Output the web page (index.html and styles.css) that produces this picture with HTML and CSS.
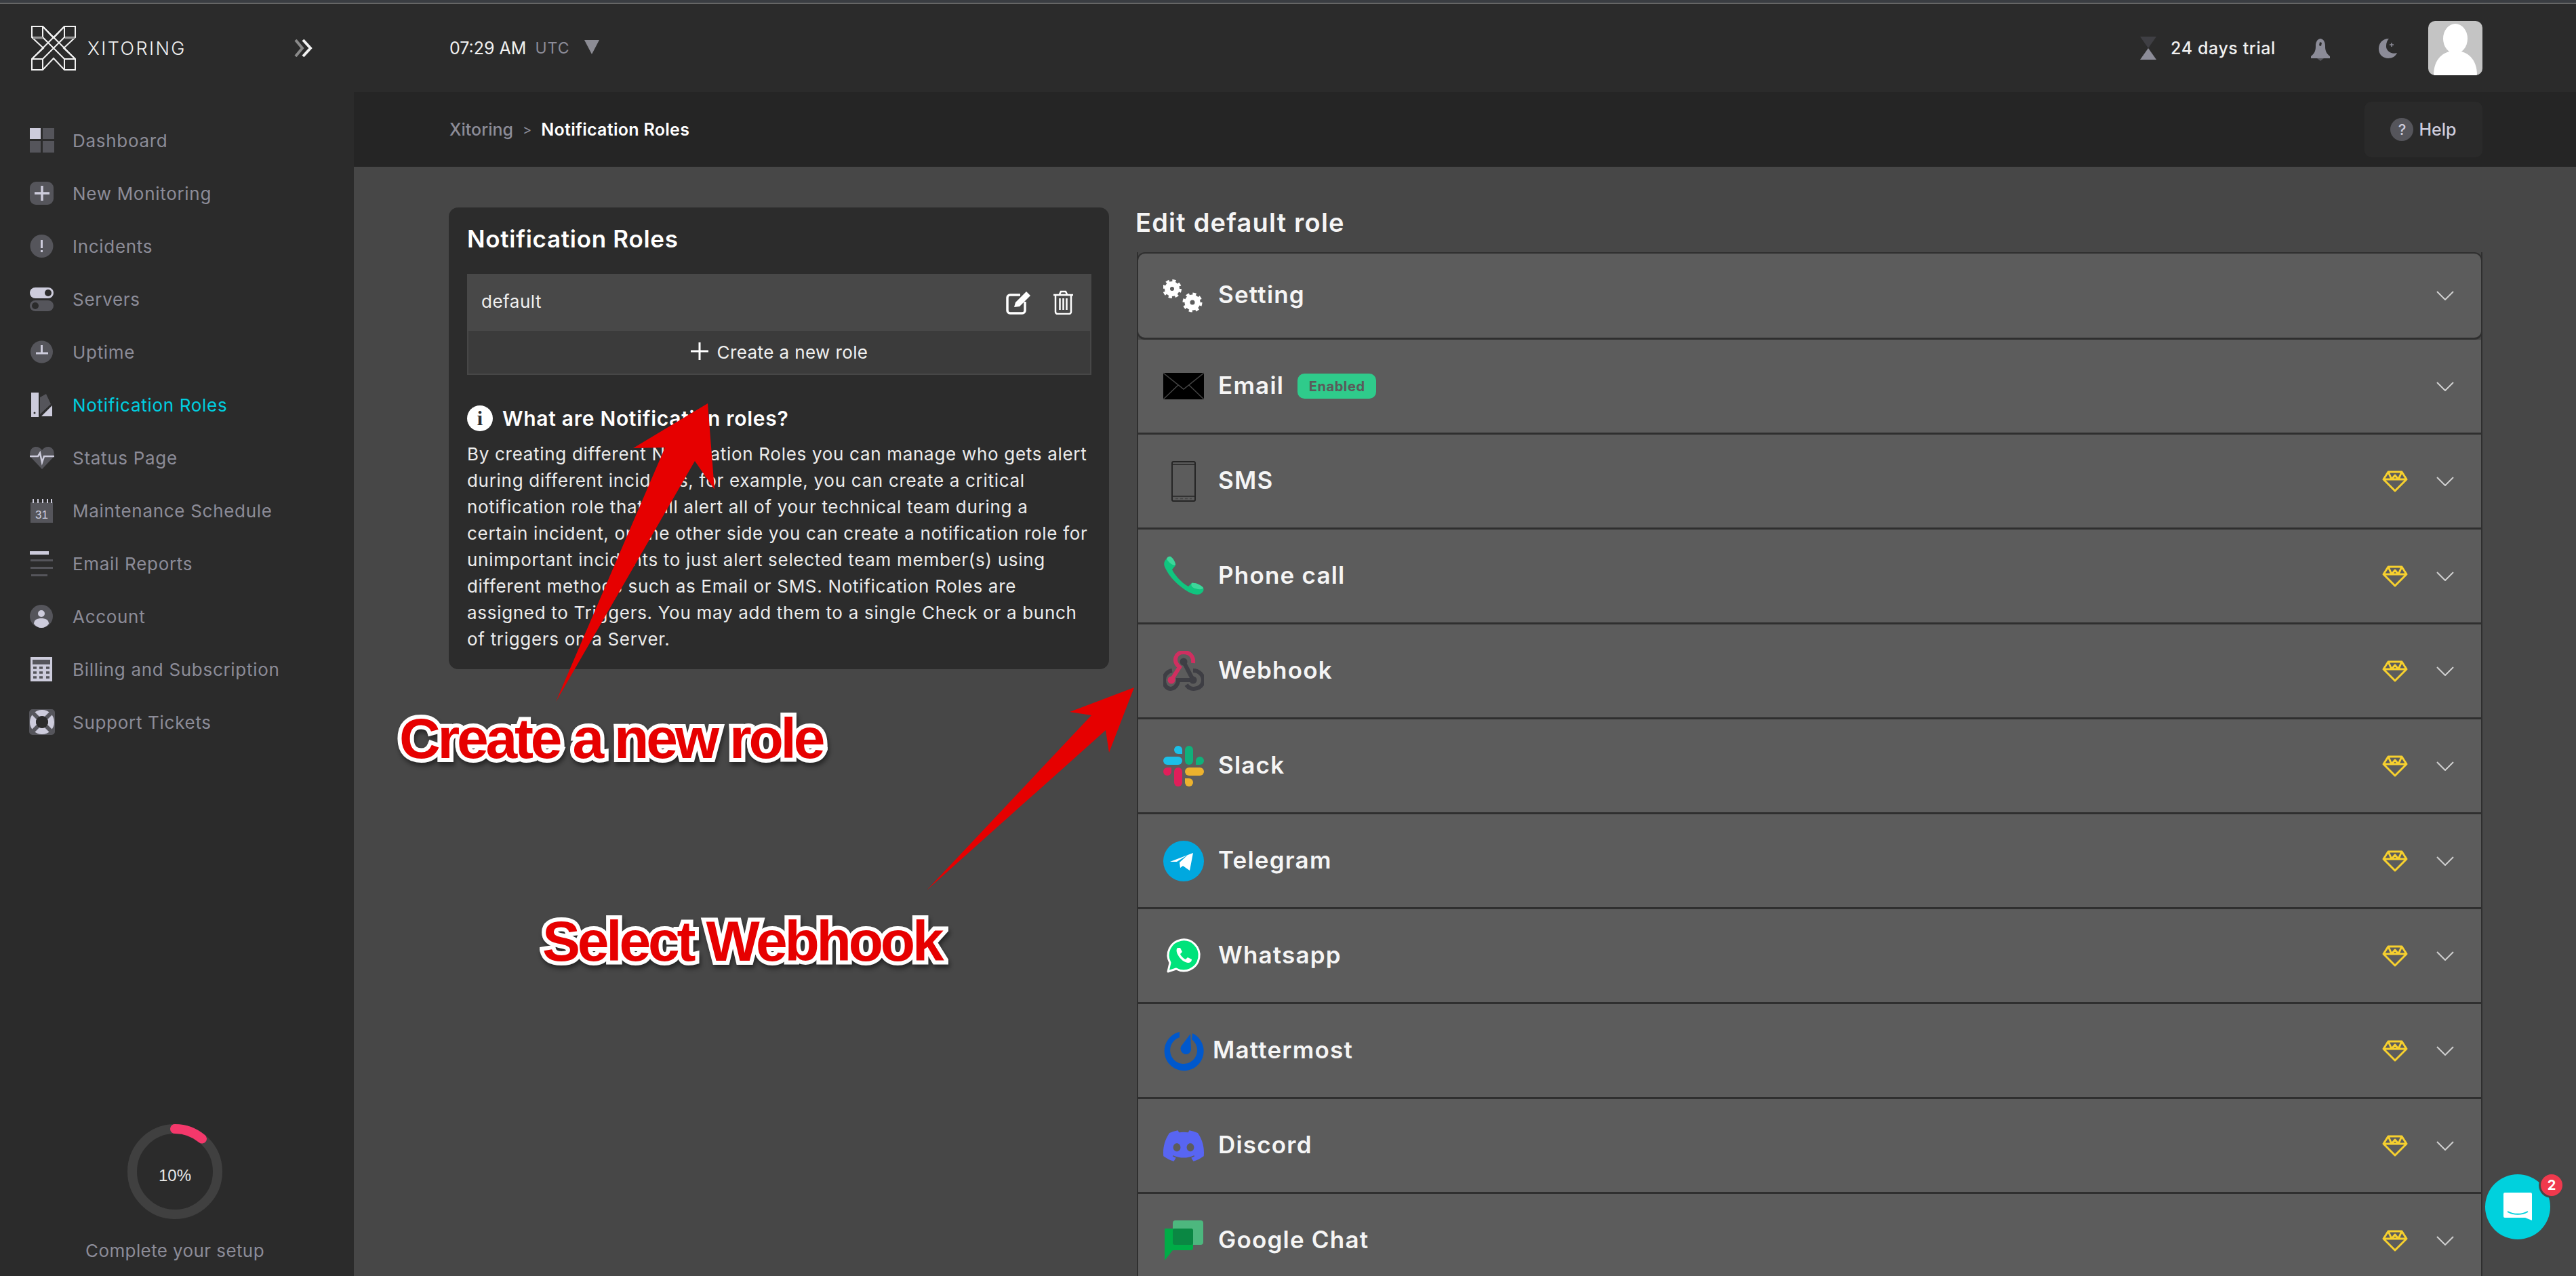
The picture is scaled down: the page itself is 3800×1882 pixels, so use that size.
FILE: index.html
```html
<!DOCTYPE html>
<html lang="en">
<head>
<meta charset="utf-8">
<title>Xitoring - Notification Roles</title>
<link rel="stylesheet" href="styles.css">
</head>
<body>
<div class="topline"></div>
<div class="shell">
  <aside class="sidebar">
    <div class="brand">
      <svg class="logo" viewBox="0 0 66 66" fill="none" stroke="#f2f2f2" stroke-width="2">
        <path d="M1 1h16l16 17L49 1h16v16L48 33l17 16v16H49L33 48 17 65H1V49l17-16L1 17z"/>
        <path d="M1 17h16V1M49 1v16h16M1 49h16v16M49 65V49h16"/>
        <path d="M17 1l32 32 16 16M17 17l32 32M49 1L17 33 1 49M49 17L17 49"/>
        <path d="M3 18h14M50 18h14" stroke="#8a8a8a" stroke-width="3"/>
      </svg>
      <span class="brand-name">XITORING</span>
      <svg class="collapse" viewBox="0 0 28 26" fill="none" stroke-width="4">
        <path d="M2 1l10 12L2 25" stroke="#8a8a8a"/>
        <path d="M13 1l11 12-11 12" stroke="#f2f2f2"/>
      </svg>
    </div>
    <nav class="nav">
      <a class="nav-item"><svg class="nav-icon" viewBox="0 0 36 36"><rect x="0" y="0" width="16" height="16" fill="#cdccdc"/><rect x="19" y="0" width="17" height="16" fill="#55555b"/><rect x="0" y="19" width="16" height="17" fill="#55555b"/><rect x="19" y="19" width="17" height="17" fill="#55555b"/></svg><span>Dashboard</span></a>
      <a class="nav-item"><svg class="nav-icon" viewBox="0 0 36 36"><rect width="35" height="34" x="0" y="1" rx="9" fill="#55555b"/><path d="M18 7v22M7 18h22" stroke="#cdccdc" stroke-width="3.5"/></svg><span>New Monitoring</span></a>
      <a class="nav-item"><svg class="nav-icon" viewBox="0 0 36 36"><circle cx="17.500" cy="18" r="17" fill="#55555b"/><path d="M17.500 9v12M17.500 24v3" stroke="#cdccdc" stroke-width="3"/></svg><span>Incidents</span></a>
      <a class="nav-item"><svg class="nav-icon" viewBox="0 0 36 36"><rect x="0" y="1" width="35" height="16" rx="8" fill="#cdccdc"/><circle cx="27" cy="9" r="5" fill="#2b2b2b"/><rect x="0" y="20" width="35" height="16" rx="8" fill="#55555b"/><circle cx="8" cy="28" r="5" fill="#2b2b2b"/></svg><span>Servers</span></a>
      <a class="nav-item"><svg class="nav-icon" viewBox="0 0 36 36"><circle cx="17.500" cy="18" r="16.500" fill="#55555b"/><path d="M17.500 8v12H27M17.500 20H9" stroke="#cdccdc" stroke-width="3" fill="none"/></svg><span>Uptime</span></a>
      <a class="nav-item nav-active"><svg class="nav-icon" viewBox="0 0 36 36"><rect x="2" y="0" width="11" height="36" fill="#cdccdc"/><circle cx="7" cy="30" r="1.500" fill="#2b2b2b"/><path d="M15 7l9-5 7 15-16 15z" fill="#55555b"/><path d="M17 35l16-16v16z" fill="#cdccdc"/></svg><span>Notification Roles</span></a>
      <a class="nav-item"><svg class="nav-icon" viewBox="0 0 36 36"><path d="M18 35L2 18C-2 12 1 2 9 2c4 0 7 2 9 5 2-3 5-5 9-5 8 0 11 10 7 16z" fill="#55555b"/><path d="M0 16h12l3-5 3 14 3-9h15" stroke="#cdccdc" stroke-width="2.500" fill="none"/></svg><span>Status Page</span></a>
      <a class="nav-item"><svg class="nav-icon" viewBox="0 0 36 36"><rect x="1" y="6" width="33" height="30" fill="#55555b"/><path d="M5 1v6M12 1v6M19 1v6M26 1v6M32 1v6" stroke="#cdccdc" stroke-width="2"/><text x="17.500" y="30" class="cal-num">31</text></svg><span>Maintenance Schedule</span></a>
      <a class="nav-item"><svg class="nav-icon" viewBox="0 0 36 36"><rect x="0" y="0" width="28" height="5" fill="#cdccdc"/><rect x="1" y="12" width="33" height="3" fill="#55555b"/><rect x="1" y="23" width="33" height="3" fill="#55555b"/><rect x="2" y="34" width="24" height="3" fill="#55555b"/></svg><span>Email Reports</span></a>
      <a class="nav-item"><svg class="nav-icon" viewBox="0 0 36 36"><circle cx="17" cy="18" r="17" fill="#55555b"/><circle cx="17" cy="14" r="5" fill="#cdccdc"/><path d="M6 29c0-6 5-8 11-8s11 2 11 8c-3 4-7 6-11 6s-8-2-11-6z" fill="#cdccdc"/></svg><span>Account</span></a>
      <a class="nav-item"><svg class="nav-icon" viewBox="0 0 36 36"><rect x="1" y="0" width="32" height="36" fill="#cdccdc"/><rect x="4" y="4" width="26" height="7" fill="#55555b"/><path d="M5 16h5M14 16h5M24 16h5M5 23h5M14 23h5M24 23h5M5 30h5M14 30h5M24 30h5" stroke="#55555b" stroke-width="3.500"/></svg><span>Billing and Subscription</span></a>
      <a class="nav-item"><svg class="nav-icon support" viewBox="0 0 38 38"><rect width="38" height="38" rx="5" fill="#55555b"/><circle cx="19" cy="19" r="13.500" fill="none" stroke="#cdccdc" stroke-width="9"/><path d="M6 6l26 26M32 6L6 32" stroke="#55555b" stroke-width="6"/><circle cx="19" cy="19" r="9" fill="#2b2b2b"/></svg><span>Support Tickets</span></a>
    </nav>
    <div class="setup">
      <div class="ring">
        <svg viewBox="0 0 140 140"><circle cx="70" cy="70" r="63" fill="none" stroke="#404040" stroke-width="14"/><path d="M70 7A63 63 0 0 1 110 21.600" fill="none" stroke="#f4386b" stroke-width="14" stroke-linecap="round"/></svg>
        <span class="ring-label">10%</span>
      </div>
      <div class="setup-text">Complete your setup</div>
    </div>
  </aside>
  <main class="main">
    <header class="topbar">
      <span class="clock">07:29 AM</span><span class="tz">UTC</span>
      <svg class="tz-caret" viewBox="0 0 22 21"><path d="M0 0h22L11 21z" fill="#8c8c94"/></svg>
      <div class="top-right">
        <svg class="hourglass" viewBox="0 0 24 34"><path d="M0 0h24L12 17z" fill="#3f3f44"/><path d="M12 17L24 34H0z" fill="#8c8c98"/></svg>
        <span class="trial">24 days trial</span>
        <svg class="bell" viewBox="0 0 28 38"><path d="M14 0v5c-5 1-7 5-7 11 0 6-1 10-7 15v3h28v-3c-6-5-7-9-7-15 0-6-2-10-7-11V0z" fill="#8c8c98"/><path d="M9 34h10l-5 4z" fill="#55555b"/><path d="M13 10l3 1-1 5-3-1z" fill="#2b2b2b"/></svg>
        <svg class="moon" viewBox="0 0 28 29"><path d="M15 0C5 0 0 7 0 15c0 9 7 14 14 14 6 0 11-3 13-8-8 3-17-3-16-11 0-4 2-8 4-10z" fill="#8c8c98"/><path d="M19 6v6M16 9h6" stroke="#8c8c98" stroke-width="1.500"/></svg>
        <svg class="avatar" viewBox="0 0 80 80"><rect width="80" height="80" fill="#c4c4c4"/><ellipse cx="40" cy="26" rx="18" ry="22" fill="#fff"/><path d="M8 80c0-24 14-36 32-36s32 12 32 36z" fill="#fff"/></svg>
      </div>
    </header>
    <div class="crumbs">
      <div class="crumb-path"><span class="crumb-root">Xitoring</span><span class="crumb-sep">&gt;</span><span class="crumb-now">Notification Roles</span></div>
      <a class="help"><span class="help-mark">?</span><span>Help</span></a>
    </div>
    <div class="content">
      <section class="card">
        <h2 class="card-title">Notification Roles</h2>
        <div class="role-list">
          <div class="role-row">
            <span class="role-name">default</span>
            <div class="role-actions">
              <svg class="act-edit" viewBox="0 0 36 36" fill="none" stroke="#fff" stroke-width="3.500"><path d="M21 7H6a4 4 0 0 0-4 4v19a4 4 0 0 0 4 4h18a4 4 0 0 0 4-4V17"/><path d="M12 25l2-7L30 2l6 6-16 16z" fill="#fff" stroke="none"/></svg>
              <svg class="act-trash" viewBox="0 0 31 36" fill="none" stroke="#fff" stroke-width="2.500"><path d="M1 7h29M10 6l2-4h7l2 4" /><path d="M4 7v25a3 3 0 0 0 3 3h17a3 3 0 0 0 3-3V7M10.500 12v17M15.500 12v17M20.500 12v17"/></svg>
            </div>
          </div>
          <div class="role-new"><svg class="plus" viewBox="0 0 26 26"><path d="M13 0v26M0 13h26" stroke="#fff" stroke-width="3"/></svg><span>Create a new role</span></div>
        </div>
        <div class="info-head">
          <span class="info-mark">i</span><h3>What are Notification roles?</h3>
        </div>
        <p class="info-text">By creating different Notification Roles you can manage who gets alert<br>during different incidents, for example, you can create a critical<br>notification role that will alert all of your technical team during a<br>certain incident, on the other side you can create a notification role for<br>unimportant incidents to just alert selected team member(s) using<br>different methods such as Email or SMS. Notification Roles are<br>assigned to Triggers. You may add them to a single Check or a bunch<br>of triggers on a Server.</p>
      </section>
      <section class="editor">
        <h2 class="editor-title">Edit default role</h2>
        <div class="accordion">
          <div class="acc-row acc-first">
            <svg class="acc-icon" viewBox="0 0 60 60"><g fill="none" stroke="#fff"><circle cx="13" cy="20" r="7" stroke-width="8"/><circle cx="13" cy="20" r="12" stroke-width="4" stroke-dasharray="5 4.420"/><circle cx="43" cy="40" r="7.500" stroke-width="8"/><circle cx="43" cy="40" r="12.500" stroke-width="4" stroke-dasharray="5 4.820"/></g></svg>
            <span class="acc-label">Setting</span>
            <svg class="chevron" viewBox="0 0 26 14"><path d="M1 1l12 12L25 1" fill="none" stroke="#d0d0d0" stroke-width="2"/></svg>
          </div>
          <div class="acc-row">
            <svg class="acc-icon" viewBox="0 0 60 60"><rect x="0" y="10" width="60" height="39" fill="#000"/><path d="M0 10l30 24 30-24M0 49l22-21M60 49L38 28" fill="none" stroke="#444" stroke-width="1.500"/></svg>
            <span class="acc-label">Email</span><span class="enabled">Enabled</span>
            <svg class="chevron" viewBox="0 0 26 14"><path d="M1 1l12 12L25 1" fill="none" stroke="#d0d0d0" stroke-width="2"/></svg>
          </div>
          <div class="acc-row">
            <svg class="acc-icon" viewBox="0 0 60 60"><rect x="13" y="1" width="34" height="58" rx="2" fill="none" stroke="#252525" stroke-width="2"/><path d="M14 5h32M14 52h32" stroke="#252525" stroke-width="1.500"/><path d="M18 55.500h24" stroke="#444" stroke-width="1.500" stroke-dasharray="4 3"/></svg>
            <span class="acc-label">SMS</span>
            <svg class="gem" viewBox="0 0 38 32"><path d="M9 2h20l7 11-17 17L2 13zM2 13h34M9 2l5 11 5-6 5 6 5-11" fill="none" stroke="#f6d02f" stroke-width="3" stroke-linejoin="round"/></svg>
            <svg class="chevron" viewBox="0 0 26 14"><path d="M1 1l12 12L25 1" fill="none" stroke="#d0d0d0" stroke-width="2"/></svg>
          </div>
          <div class="acc-row">
            <svg class="acc-icon" viewBox="0 0 60 60"><path d="M5 4C1 8 0 12 3 18c6 13 19 26 34 35 6 3 14 6 19 2 4-3 4-6 3-8-4-4-12-8-17-7l-5 5C26 39 17 28 13 20l5-6C19 10 14 3 11 1 9 0 7 1 5 4z" fill="#10c57f"/><path d="M5 4c1-3 4-4 6-3 3 2 7 8 7 12-4 2-11-4-13-9zM42 40c5-1 14 3 17 7 0 3-10 3-16-1-2-2-2-4-1-6z" fill="#3dd69a"/></svg>
            <span class="acc-label">Phone call</span>
            <svg class="gem" viewBox="0 0 38 32"><path d="M9 2h20l7 11-17 17L2 13zM2 13h34M9 2l5 11 5-6 5 6 5-11" fill="none" stroke="#f6d02f" stroke-width="3" stroke-linejoin="round"/></svg>
            <svg class="chevron" viewBox="0 0 26 14"><path d="M1 1l12 12L25 1" fill="none" stroke="#d0d0d0" stroke-width="2"/></svg>
          </div>
          <div class="acc-row">
            <svg class="acc-icon" viewBox="0 0 60 60"><g fill="none" stroke="#3e3e44" stroke-width="6"><path d="M30 16l14 27"/><path d="M44 43H22c0 7-6 13-11 13C4 56 1 49 1 43c0-7 5-13 12-14"/><path d="M44 29c9 0 15 7 15 14 0 8-7 13-14 13-5 0-9-3-11-6"/></g><path d="M12 43l12-19C14 16 17 2 30 2c10 0 15 7 14 16" fill="none" stroke="#cf2f60" stroke-width="6"/><circle cx="12" cy="43" r="5.500" fill="#cf2f60"/><circle cx="30" cy="16" r="5.500" fill="#3e3e44"/><circle cx="44" cy="43" r="5.500" fill="#3e3e44"/></svg>
            <span class="acc-label">Webhook</span>
            <svg class="gem" viewBox="0 0 38 32"><path d="M9 2h20l7 11-17 17L2 13zM2 13h34M9 2l5 11 5-6 5 6 5-11" fill="none" stroke="#f6d02f" stroke-width="3" stroke-linejoin="round"/></svg>
            <svg class="chevron" viewBox="0 0 26 14"><path d="M1 1l12 12L25 1" fill="none" stroke="#d0d0d0" stroke-width="2"/></svg>
          </div>
          <div class="acc-row">
            <svg class="acc-icon" viewBox="0 0 60 60"><path d="M22 0a6 6 0 0 0 0 12h6V6a6 6 0 0 0-6-6z" fill="#1bc0e8"/><rect x="0" y="16" width="28" height="12" rx="6" fill="#1bc0e8"/><rect x="32" y="0" width="12" height="28" rx="6" fill="#10b07a"/><path d="M60 22a6 6 0 0 0-12 0v6h6a6 6 0 0 0 6-6z" fill="#10b07a"/><path d="M0 38a6 6 0 0 0 12 0v-6H6a6 6 0 0 0-6 6z" fill="#e01e5a"/><rect x="16" y="32" width="12" height="28" rx="6" fill="#e01e5a"/><rect x="32" y="32" width="28" height="12" rx="6" fill="#ecb22e"/><path d="M38 60a6 6 0 0 0 0-12h-6v6a6 6 0 0 0 6 6z" fill="#ecb22e"/></svg>
            <span class="acc-label">Slack</span>
            <svg class="gem" viewBox="0 0 38 32"><path d="M9 2h20l7 11-17 17L2 13zM2 13h34M9 2l5 11 5-6 5 6 5-11" fill="none" stroke="#f6d02f" stroke-width="3" stroke-linejoin="round"/></svg>
            <svg class="chevron" viewBox="0 0 26 14"><path d="M1 1l12 12L25 1" fill="none" stroke="#d0d0d0" stroke-width="2"/></svg>
          </div>
          <div class="acc-row">
            <svg class="acc-icon" viewBox="0 0 60 60"><circle cx="30" cy="30" r="30" fill="#00a8df"/><path d="M10 31l34-13-5 26-10-7-4 3-1-8 12-11-16 10z" fill="#fff"/></svg>
            <span class="acc-label">Telegram</span>
            <svg class="gem" viewBox="0 0 38 32"><path d="M9 2h20l7 11-17 17L2 13zM2 13h34M9 2l5 11 5-6 5 6 5-11" fill="none" stroke="#f6d02f" stroke-width="3" stroke-linejoin="round"/></svg>
            <svg class="chevron" viewBox="0 0 26 14"><path d="M1 1l12 12L25 1" fill="none" stroke="#d0d0d0" stroke-width="2"/></svg>
          </div>
          <div class="acc-row">
            <svg class="acc-icon" viewBox="0 0 60 60"><path d="M7 53l3-13a23 23 0 1 1 9 9z" fill="#00e37b" stroke="#fff" stroke-width="3" stroke-linejoin="round"/><path d="M21 18c-2 2-2 6 1 11 3 6 9 10 14 11 4 0 6-2 6-5l-6-3-3 3c-3-1-7-5-8-8l3-3-3-6z" fill="#fff"/></svg>
            <span class="acc-label">Whatsapp</span>
            <svg class="gem" viewBox="0 0 38 32"><path d="M9 2h20l7 11-17 17L2 13zM2 13h34M9 2l5 11 5-6 5 6 5-11" fill="none" stroke="#f6d02f" stroke-width="3" stroke-linejoin="round"/></svg>
            <svg class="chevron" viewBox="0 0 26 14"><path d="M1 1l12 12L25 1" fill="none" stroke="#d0d0d0" stroke-width="2"/></svg>
          </div>
          <div class="acc-row">
            <svg class="acc-icon" viewBox="0 0 60 60"><path d="M24 2A29 29 0 1 0 43 4l-1 9A20 20 0 1 1 24 10z" fill="#0058cc"/><path d="M40 5l1 22c0 6-6 10-11 7s-6-9-2-13z" fill="#0058cc"/></svg>
            <span class="acc-label acc-label-tight">Mattermost</span>
            <svg class="gem" viewBox="0 0 38 32"><path d="M9 2h20l7 11-17 17L2 13zM2 13h34M9 2l5 11 5-6 5 6 5-11" fill="none" stroke="#f6d02f" stroke-width="3" stroke-linejoin="round"/></svg>
            <svg class="chevron" viewBox="0 0 26 14"><path d="M1 1l12 12L25 1" fill="none" stroke="#d0d0d0" stroke-width="2"/></svg>
          </div>
          <div class="acc-row">
            <svg class="acc-icon" viewBox="0 0 24 24"><path fill="#5865f2" d="M20.317 4.3698a19.7913 19.7913 0 00-4.8851-1.5152.0741.0741 0 00-.0785.0371c-.211.3753-.4447.8648-.6083 1.2495-1.8447-.2762-3.68-.2762-5.4868 0-.1636-.3933-.4058-.8742-.6177-1.2495a.077.077 0 00-.0785-.037 19.7363 19.7363 0 00-4.8852 1.515.0699.0699 0 00-.0321.0277C.5334 9.0458-.319 13.5799.0992 18.0578a.0824.0824 0 00.0312.0561c2.0528 1.5076 4.0413 2.4228 5.9929 3.0294a.0777.0777 0 00.0842-.0276c.4616-.6304.8731-1.2952 1.226-1.9942a.076.076 0 00-.0416-.1057c-.6528-.2476-1.2743-.5495-1.8722-.8923a.077.077 0 01-.0076-.1277c.1258-.0943.2517-.1923.3718-.2914a.0743.0743 0 01.0776-.0105c3.9278 1.7933 8.18 1.7933 12.0614 0a.0739.0739 0 01.0785.0095c.1202.099.246.1981.3728.2924a.077.077 0 01-.0066.1276 12.2986 12.2986 0 01-1.873.8914.0766.0766 0 00-.0407.1067c.3604.698.7719 1.3628 1.225 1.9932a.076.076 0 00.0842.0286c1.961-.6067 3.9495-1.5219 6.0023-3.0294a.077.077 0 00.0313-.0552c.5004-5.177-.8382-9.6739-3.5485-13.6604a.061.061 0 00-.0312-.0286zM8.02 15.3312c-1.1825 0-2.1569-1.0857-2.1569-2.419 0-1.3332.9555-2.4189 2.157-2.4189 1.2108 0 2.1757 1.0952 2.1568 2.419 0 1.3332-.9555 2.4189-2.1569 2.4189zm7.9748 0c-1.1825 0-2.1569-1.0857-2.1569-2.419 0-1.3332.9554-2.4189 2.1569-2.4189 1.2108 0 2.1757 1.0952 2.1568 2.419 0 1.3332-.946 2.4189-2.1568 2.4189Z"/></svg>
            <span class="acc-label">Discord</span>
            <svg class="gem" viewBox="0 0 38 32"><path d="M9 2h20l7 11-17 17L2 13zM2 13h34M9 2l5 11 5-6 5 6 5-11" fill="none" stroke="#f6d02f" stroke-width="3" stroke-linejoin="round"/></svg>
            <svg class="chevron" viewBox="0 0 26 14"><path d="M1 1l12 12L25 1" fill="none" stroke="#d0d0d0" stroke-width="2"/></svg>
          </div>
          <div class="acc-row">
            <svg class="acc-icon" viewBox="0 0 60 60"><rect x="14" y="0" width="45" height="36" rx="4" fill="#4db77e"/><path d="M2 12h38a4 4 0 0 1 4 4v24a4 4 0 0 1-4 4H14L2 59z" fill="#00ac47"/><rect x="14" y="12" width="30" height="24" rx="3" fill="#0a8743"/></svg>
            <span class="acc-label">Google Chat</span>
            <svg class="gem" viewBox="0 0 38 32"><path d="M9 2h20l7 11-17 17L2 13zM2 13h34M9 2l5 11 5-6 5 6 5-11" fill="none" stroke="#f6d02f" stroke-width="3" stroke-linejoin="round"/></svg>
            <svg class="chevron" viewBox="0 0 26 14"><path d="M1 1l12 12L25 1" fill="none" stroke="#d0d0d0" stroke-width="2"/></svg>
          </div>
        </div>
      </section>
    </div>
  </main>
</div>

<svg class="arrows" viewBox="0 0 3800 1882">
  <polygon points="1044,595 1054,722 1025,680 820,1035 981,660 934,661" fill="#e60000"/>
  <polygon points="1673,1014 1636,1110 1631,1077 1367,1313 1610,1055 1578,1050" fill="#e60000"/>
</svg>
<div class="callout callout-create">Create a new role</div>
<div class="callout callout-webhook">Select Webhook</div>

<div class="chat">
  <svg class="chat-glyph" viewBox="0 0 44 44"><path d="M3 1h38a2 2 0 0 1 2 2v39l-10-4H3a2 2 0 0 1-2-2V3a2 2 0 0 1 2-2z" fill="#fff"/><path d="M7 29c9 5 21 5 30 0" fill="none" stroke="#00d1dd" stroke-width="2"/></svg>
  <span class="chat-badge">2</span>
</div>
</body>
</html>
```

FILE: styles.css
```css
* { box-sizing: border-box; }
html, body { margin: 0; height: 100%; overflow: hidden; }
body { background: #474747; font-family: "Inter", "Noto Sans", sans-serif; color: #fff; width: 3800px; height: 1882px; position: relative; }
h2, h3, p { margin: 0; }

.topline { height: 6px; background: #3a3d42; border-bottom: 2px solid #666; }
.shell { display: flex; height: 1876px; }

.sidebar { width: 522px; flex: none; background: #2b2b2b; display: flex; flex-direction: column; }
.brand { height: 130px; display: flex; align-items: center; padding: 0 60px 0 46px; }
.logo { width: 66px; height: 66px; flex: none; }
.brand-name { margin-left: 17px; font-size: 27px; font-weight: 300; letter-spacing: 2.4px; color: #f0f0f0; }
.collapse { width: 28px; height: 26px; margin-left: auto; }
.nav { margin-top: 32px; display: flex; flex-direction: column; }
.nav-item { height: 78px; display: flex; align-items: center; gap: 27px; padding-left: 44px; font-size: 26px; color: #8c8c98; letter-spacing: .7px; }
.nav-active { color: #00cfe0; }
.nav-icon { width: 36px; height: 36px; flex: none; overflow: visible; }
.support { width: 38px; height: 38px; margin: 0 -1px; }
.cal-num { font-family: "Liberation Sans", sans-serif; font-size: 17px; fill: #cdccdc; text-anchor: middle; letter-spacing: 0; }
.setup { margin-top: auto; display: flex; flex-direction: column; align-items: center; padding: 0 6px 22px 0; }
.ring { width: 140px; height: 140px; position: relative; display: flex; align-items: center; justify-content: center; }
.ring svg { width: 140px; height: 140px; }
.ring-label { position: absolute; top: 62px; left: 0; right: 0; text-align: center; font-family: "Liberation Sans", sans-serif; font-size: 24px; color: #e8e8e8; }
.setup-text { margin-top: 31px; font-size: 26px; color: #8c8c98; letter-spacing: .4px; }

.main { flex: 1; display: flex; flex-direction: column; min-width: 0; }
.topbar { height: 130px; flex: none; background: #2b2b2b; display: flex; align-items: center; padding: 0 138px 0 141px; }
.clock { font-size: 25px; color: #f0f0f0; }
.tz { margin-left: 13px; font-size: 23px; color: #8c8c98; letter-spacing: 1px; }
.tz-caret { width: 22px; height: 21px; margin: -4px 0 0 22px; }
.top-right { margin-left: auto; display: flex; align-items: center; }
.hourglass { width: 24px; height: 34px; }
.trial { margin-left: 21px; font-size: 25px; font-weight: 500; color: #f0f0f0; letter-spacing: .6px; }
.bell { width: 28px; height: 38px; margin-left: 52px; }
.moon { width: 28px; height: 29px; margin-left: 72px; }
.avatar { width: 80px; height: 80px; margin-left: 45px; border-radius: 10px; }

.crumbs { height: 110px; flex: none; background: #252525; display: flex; align-items: center; justify-content: space-between; padding: 0 138px 0 141px; }
.crumb-path { display: flex; align-items: center; font-size: 25px; }
.crumb-root { color: #8c8c98; font-weight: 500; }
.crumb-sep { margin: 0 14px; font-size: 20px; color: #8c8c98; }
.crumb-now { font-weight: 600; color: #fff; letter-spacing: .3px; }
.help { width: 174px; height: 82px; background: #2a2a2a; border-radius: 10px; display: flex; align-items: center; justify-content: center; gap: 8px; font-size: 25px; font-weight: 500; color: #cdccdc; }
.help-mark { width: 34px; height: 34px; border-radius: 50%; background: #55555b; display: flex; align-items: center; justify-content: center; font-size: 22px; color: #cdccdc; }

.content { flex: 1; display: flex; align-items: flex-start; gap: 41px; padding: 60px 138px 0 140px; min-height: 0; }
.card { width: 974px; flex: none; background: #2c2c2c; border-radius: 14px; padding: 26px 26px 25px 27px; }
.card-title { font-size: 35px; line-height: 40px; font-weight: 600; letter-spacing: .7px; }
.role-list { margin-top: 32px; }
.role-row { height: 84px; background: #484848; display: flex; align-items: center; justify-content: space-between; padding: 0 26px 0 21px; font-size: 26px; color: #f0f0f0; }
.role-name { margin-top: -4px; letter-spacing: .5px; }
.role-actions { display: flex; align-items: center; gap: 33px; }
.act-edit { width: 36px; height: 36px; overflow: visible; }
.act-trash { width: 31px; height: 36px; }
.role-new { height: 65px; background: #3b3b3b; border: 2px solid #474747; border-top: 0; display: flex; align-items: center; justify-content: center; gap: 13px; font-size: 26px; color: #f0f0f0; letter-spacing: .4px; }
.plus { width: 26px; height: 26px; margin-top: -4px; }
.info-head { margin-top: 44px; height: 40px; display: flex; align-items: center; gap: 14px; }
.info-mark { width: 38px; height: 38px; border-radius: 50%; background: #fff; color: #2c2c2c; font-family: "Liberation Serif", serif; font-weight: 700; font-size: 30px; display: flex; align-items: center; justify-content: center; }
.info-head h3 { font-size: 30px; font-weight: 600; letter-spacing: .7px; }
.info-text { margin-top: 13px; font-size: 26px; line-height: 39px; color: #ececec; white-space: nowrap; letter-spacing: .7px; }

.editor { flex: 1; min-width: 0; }
.editor-title { font-size: 38px; line-height: 44px; height: 66px; font-weight: 600; margin-left: -2px; color: #f5f5f5; letter-spacing: 1.2px; }
.accordion { border-left: 2px solid #2f2f2f; border-right: 2px solid #2f2f2f; }
.acc-row { height: 140px; background: #5c5c5c; border-bottom: 3px solid #2f2f2f; display: flex; align-items: center; padding: 0 40px 0 37px; }
.acc-first { height: 129px; border: 2px solid #2f2f2f; border-bottom-width: 3px; border-radius: 12px; margin: 0 -2px; padding-left: 37px; padding-right: 40px; }
.acc-icon { width: 60px; height: 60px; flex: none; }
.acc-label { margin: -4px 0 0 21px; font-size: 35px; font-weight: 600; color: #f5f5f5; letter-spacing: 1.2px; }
.acc-label-tight { margin-left: 13px; }
.enabled { margin-left: 20px; width: 116px; height: 37px; border-radius: 10px; background: #2fcb8b; color: #5a5a5a; font-size: 20px; font-weight: 700; display: flex; align-items: center; justify-content: center; letter-spacing: .6px; }
.gem { width: 38px; height: 32px; margin-left: auto; }
.chevron { width: 26px; height: 14px; margin-left: 42px; }
.acc-first .chevron, .acc-row:nth-child(2) .chevron { margin-left: auto; }

.arrows { position: absolute; left: 0; top: 0; width: 3800px; height: 1882px; pointer-events: none; }
.callout { position: absolute; font-family: "Liberation Sans", sans-serif; font-weight: 700; font-size: 84px; line-height: 84px; letter-spacing: -4.2px; color: #e60000; -webkit-text-stroke: 12px #fff; paint-order: stroke fill; white-space: nowrap; filter: drop-shadow(2px 5px 3px rgba(0,0,0,.45)); }
.callout-create { left: 589px; top: 1047px; }
.callout-webhook { left: 800px; top: 1346px; }

.chat { position: absolute; left: 3666px; top: 1732px; width: 96px; height: 96px; border-radius: 50%; background: #00d1dd; display: flex; align-items: center; justify-content: center; }
.chat-glyph { width: 44px; height: 44px; }
.chat-badge { position: absolute; right: -18px; top: 0; width: 32px; height: 32px; border-radius: 50%; background: #f0394d; box-shadow: 0 0 0 3px #474747; font-size: 20px; font-weight: 700; display: flex; align-items: center; justify-content: center; }
```
